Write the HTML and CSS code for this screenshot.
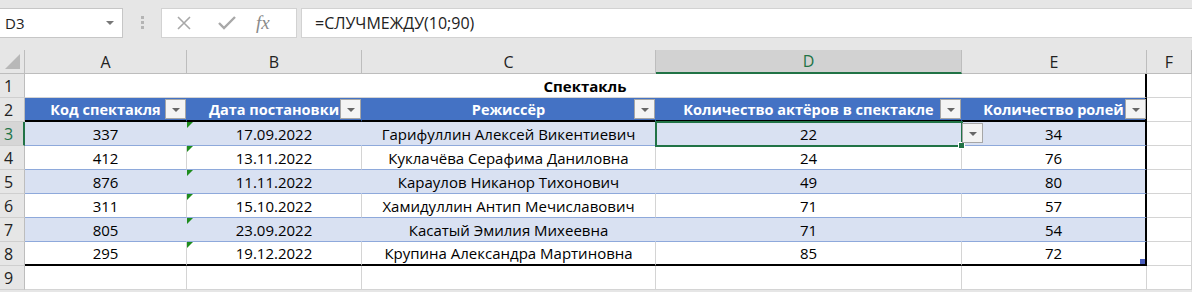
FILE: index.html
```html
<!DOCTYPE html>
<html lang="ru">
<head>
  <meta charset="UTF-8">
  <title>Спектакль</title>
  <link rel="stylesheet" href="styles.css">
</head>
<body>
  <div class="formula-bar">
    <div class="name-box">
      <span>D3</span>
      <span class="caret"></span>
    </div>
    <div class="grip"><i></i><i></i><i></i></div>
    <div class="fx-buttons">
      <svg width="16" height="16" viewBox="0 0 16 16" aria-hidden="true">
        <path d="M2 2 L14 14 M14 2 L2 14" stroke="#a8a8a8" stroke-width="1.6" fill="none"/>
      </svg>
      <svg width="18" height="16" viewBox="0 0 18 16" aria-hidden="true">
        <path d="M1 8 L6 13 L17 2" stroke="#a8a8a8" stroke-width="2.4" fill="none"/>
      </svg>
      <span class="fx">fx</span>
    </div>
    <div class="formula">=СЛУЧМЕЖДУ(10;90)</div>
  </div>

  <div class="sheet">
    <!-- заголовки столбцов -->
    <div class="corner"><span></span></div>
    <div class="col-head">A</div>
    <div class="col-head">B</div>
    <div class="col-head">C</div>
    <div class="col-head selected">D</div>
    <div class="col-head">E</div>
    <div class="col-head">F</div>

    <!-- строка 1 -->
    <div class="row-head">1</div>
    <div class="cell title">Спектакль</div>
    <div class="cell"></div>

    <!-- строка 2: шапка таблицы -->
    <div class="row-head">2</div>
    <div class="cell th">Код спектакля<span class="filter"></span></div>
    <div class="cell th">Дата постановки<span class="filter"></span></div>
    <div class="cell th">Режиссёр<span class="filter"></span></div>
    <div class="cell th">Количество актёров в спектакле<span class="filter"></span></div>
    <div class="cell th last">Количество ролей<span class="filter"></span></div>
    <div class="cell"></div>

    <div class="row-head active">3</div>
    <div class="cell band">337</div>
    <div class="cell band flag">17.09.2022</div>
    <div class="cell band">Гарифуллин Алексей Викентиевич</div>
    <div class="cell band current">22<span class="handle"></span><span class="list-btn"></span></div>
    <div class="cell band last">34</div>
    <div class="cell"></div>

    <div class="row-head">4</div>
    <div class="cell plain">412</div>
    <div class="cell plain flag">13.11.2022</div>
    <div class="cell plain">Куклачёва Серафима Даниловна</div>
    <div class="cell plain">24</div>
    <div class="cell plain last">76</div>
    <div class="cell"></div>

    <div class="row-head">5</div>
    <div class="cell band">876</div>
    <div class="cell band flag">11.11.2022</div>
    <div class="cell band">Караулов Никанор Тихонович</div>
    <div class="cell band">49</div>
    <div class="cell band last">80</div>
    <div class="cell"></div>

    <div class="row-head">6</div>
    <div class="cell plain">311</div>
    <div class="cell plain flag">15.10.2022</div>
    <div class="cell plain">Хамидуллин Антип Мечиславович</div>
    <div class="cell plain">71</div>
    <div class="cell plain last">57</div>
    <div class="cell"></div>

    <div class="row-head">7</div>
    <div class="cell band">805</div>
    <div class="cell band flag">23.09.2022</div>
    <div class="cell band">Касатый Эмилия Михеевна</div>
    <div class="cell band">71</div>
    <div class="cell band last">54</div>
    <div class="cell"></div>

    <div class="row-head">8</div>
    <div class="cell plain bottom">295</div>
    <div class="cell plain bottom flag">19.12.2022</div>
    <div class="cell plain bottom">Крупина Александра Мартиновна</div>
    <div class="cell plain bottom">85</div>
    <div class="cell plain bottom last">72<span class="resize"></span></div>
    <div class="cell"></div>

    <div class="row-head">9</div>
    <div class="cell"></div>
    <div class="cell"></div>
    <div class="cell"></div>
    <div class="cell"></div>
    <div class="cell"></div>
    <div class="cell"></div>
  </div>
</body>
</html>
```

FILE: styles.css
```css
* {
  box-sizing: border-box;
}

body {
  margin: 0;
  width: 1192px;
  height: 292px;
  overflow: hidden;
  background: #e6e6e6;
  font-family: "Open Sans", "Noto Sans", sans-serif;
  color: #000;
}

/* строка формул */
.formula-bar {
  display: flex;
  align-items: center;
  height: 50px;
  padding-bottom: 5px;
}

.name-box {
  width: 124px;
  height: 30px;
  margin-left: -1px;
  background: #fff;
  border: 1px solid #c6c6c6;
  display: flex;
  align-items: center;
  justify-content: space-between;
  padding: 0 8px 0 5px;
  font-size: 15px;
  color: #222;
}

.caret {
  width: 0;
  height: 0;
  border-left: 4px solid transparent;
  border-right: 4px solid transparent;
  border-top: 4px solid #777;
}

.grip {
  width: 38px;
  display: flex;
  flex-direction: column;
  align-items: center;
  gap: 2px;
}

.grip i {
  width: 3px;
  height: 3px;
  background: #b4b4b4;
}

.fx-buttons {
  width: 136px;
  height: 30px;
  background: #fff;
  border: 1px solid #d2d2d2;
  display: flex;
  align-items: center;
  padding-left: 14px;
  gap: 26px;
}

.fx {
  font-family: "Liberation Serif", serif;
  font-style: italic;
  font-size: 19px;
  color: #8a8a8a;
  margin-left: -6px;
}

.formula {
  flex: 1;
  height: 30px;
  margin-left: 4px;
  background: #fff;
  border: 1px solid #d2d2d2;
  border-right: none;
  padding-left: 13px;
  font-size: 16px;
  line-height: 28px;
  color: #222;
}

/* лист */
.sheet {
  display: grid;
  grid-template-columns: 25px 162px 175px 294px 306px 185px 1fr;
  grid-auto-rows: 24px;
  background: #fff;
}

.corner,
.col-head,
.row-head {
  background: #e6e6e6;
  font-size: 16px;
  color: #222;
}

.corner {
  border-right: 1px solid #bdbdbd;
  border-bottom: 1px solid #bdbdbd;
  position: relative;
}

.corner span {
  position: absolute;
  right: 4px;
  bottom: 4px;
  width: 0;
  height: 0;
  border-left: 15px solid transparent;
  border-bottom: 15px solid #b8b8b8;
}

.col-head {
  display: flex;
  align-items: center;
  justify-content: center;
  border-right: 1px solid #bdbdbd;
  border-bottom: 1px solid #bdbdbd;
}

.col-head.selected {
  background: #d2d2d2;
  color: #217346;
  border-bottom: 2px solid #217346;
}

.row-head {
  display: flex;
  align-items: center;
  padding-left: 4px;
  border-right: 1px solid #bdbdbd;
  border-bottom: 1px solid #cfcfcf;
}

.row-head.active {
  background: #d6d6d6;
  color: #217346;
  border-right: 2px solid #217346;
}

.cell {
  position: relative;
  display: flex;
  align-items: center;
  justify-content: center;
  font-size: 15px;
  white-space: nowrap;
  border-right: 1px solid #d4d4d4;
  border-bottom: 1px solid #d4d4d4;
}

.title {
  grid-column: span 5;
  font-weight: 700;
  border-right: 2px solid #000;
}

.th {
  background: #4472c4;
  color: #fff;
  font-size: 14.5px;
  font-weight: 700;
  border-right-color: #4472c4;
  border-bottom: 2px solid #000;
}

.band {
  background: #d9e1f2;
  border-right-color: #d9e1f2;
  border-bottom-color: #8ea9db;
}

.plain {
  border-bottom-color: #8ea9db;
}

.cell.last {
  border-right: 2px solid #000;
}

.cell.bottom {
  border-bottom: 2px solid #000;
}

/* кнопки фильтра в шапке */
.filter {
  position: absolute;
  right: 0;
  bottom: 1px;
  width: 21px;
  height: 20px;
  background: #f4f4f4;
  border: 1px solid #a6a6a6;
}

.th.last .filter {
  right: -1px;
}

.filter::after,
.list-btn::after {
  content: "";
  position: absolute;
  left: 6px;
  top: 8px;
  border-left: 4px solid transparent;
  border-right: 4px solid transparent;
  border-top: 4px solid #666;
}

/* зелёные треугольники ошибок */
.flag::before {
  content: "";
  position: absolute;
  left: 0;
  top: 0;
  border-top: 6px solid #1e8c1e;
  border-right: 6px solid transparent;
}

/* выделенная ячейка */
.current {
  outline: 2px solid #217346;
  outline-offset: -1px;
  z-index: 2;
}

.handle {
  position: absolute;
  right: -4px;
  bottom: -4px;
  width: 7px;
  height: 7px;
  background: #217346;
  border: 1px solid #fff;
}

.list-btn {
  position: absolute;
  left: 100%;
  top: 1px;
  margin-left: 1px;
  width: 21px;
  height: 20px;
  background: #f2f2f2;
  border: 1px solid #a6a6a6;
}

.resize {
  position: absolute;
  right: 0;
  bottom: 0;
  width: 5px;
  height: 5px;
  background: #4a5ebd;
}
```
